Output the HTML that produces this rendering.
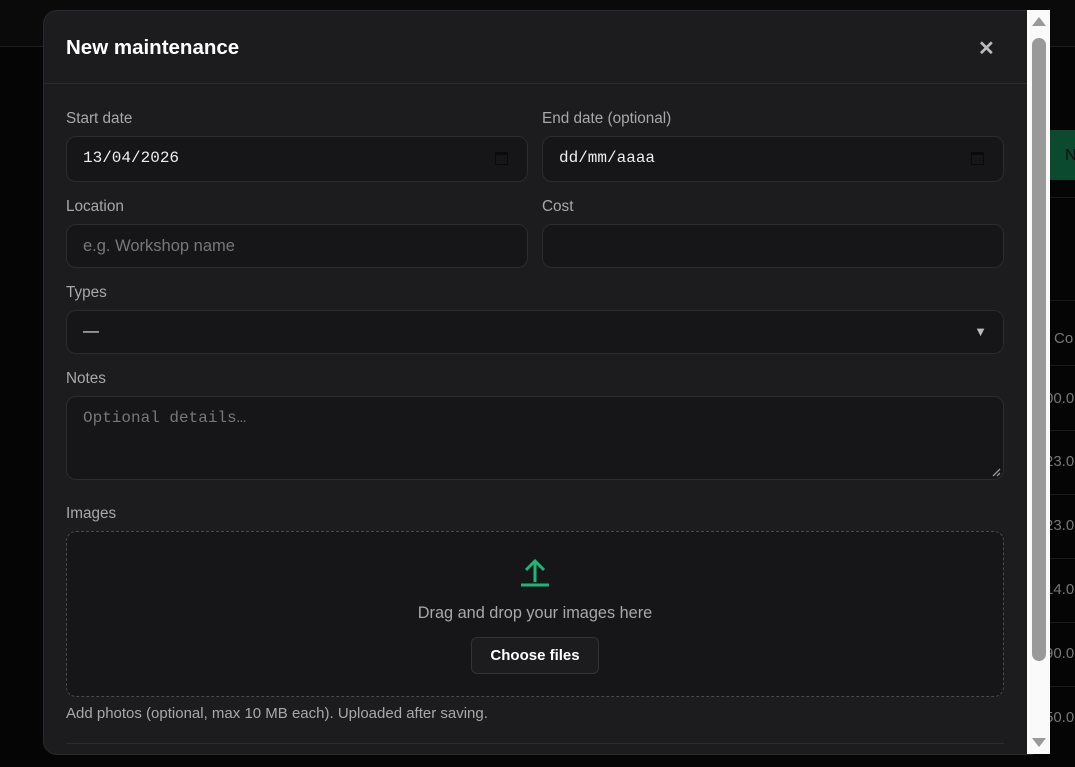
<!DOCTYPE html>
<html><head><style>
*{box-sizing:border-box;margin:0;padding:0}
body{width:1075px;height:767px;background:#050505;position:relative;overflow:hidden;font-family:"Liberation Sans",sans-serif}
.topbar{position:absolute;left:0;top:0;width:1075px;height:47px;background:#0a0a0b;border-bottom:1px solid #1e1e20}
.green{position:absolute;left:1050px;top:130px;width:30px;height:50px;background:#0b4a2e;color:#111;font-size:16px;padding:17px 0 0 15px}
.bgtext{position:absolute;left:1050px;color:#777;font-size:15px}
.row{position:absolute;left:1050px;width:25px;height:1px;background:#1a1a1c}
.modal{position:absolute;left:43px;top:10px;width:1000px;height:745px;background:#1c1c1e;border:1px solid #2a2a2c;border-radius:14px;overflow:hidden}
.hd{height:73px;border-bottom:1px solid #2c2c2e;padding:25px 22px;color:#fff;font-weight:bold;font-size:20.5px}
.x{position:absolute;left:934px;top:25px;color:#bbb;font-size:20px;font-weight:bold}
.lbl{position:absolute;color:#a8a8aa;font-size:15.3px}
.in{position:absolute;background:#161618;border:1px solid #2c2c2e;border-radius:10px;color:#eee;font-family:"Liberation Mono",monospace;font-size:16px;padding:12px 16px}
.cal{position:absolute;right:19px;top:15px;width:13px;height:13px;border:1.5px solid #0a0a0a;border-top-width:3px}
.drop{position:absolute;left:22px;top:520px;width:938px;height:166px;border:1px dashed #4a4a4e;border-radius:10px;background:#161618}
.sb{position:absolute;left:1027px;top:10px;width:23px;height:744px;background:#fafafa}
</style></head><body>
<div class="topbar"></div>
<div class="green">N</div>
<div class="row" style="top:197px"></div><div class="row" style="top:300px"></div><div class="row" style="top:365px"></div>
<div class="row" style="top:430px"></div><div class="row" style="top:494px"></div><div class="row" style="top:558px"></div><div class="row" style="top:622px"></div><div class="row" style="top:686px"></div>
<div class="bgtext" style="top:330px;left:1054px">Co</div>
<div class="bgtext" style="top:390px;left:1045px">00.0</div>
<div class="bgtext" style="top:453px;left:1045px">23.0</div>
<div class="bgtext" style="top:517px;left:1045px">23.0</div>
<div class="bgtext" style="top:581px;left:1045px">14.0</div>
<div class="bgtext" style="top:645px;left:1045px">90.0</div>
<div class="bgtext" style="top:709px;left:1045px">50.0</div>
<div class="modal">
<div class="hd">New maintenance</div>
<div class="x">✕</div>
<div class="lbl" style="left:22px;top:99px">Start date</div>
<div class="lbl" style="left:498px;top:99px">End date (optional)</div>
<div class="in" style="left:22px;top:125px;width:462px;height:46px">13/04/2026<div class="cal"></div></div>
<div class="in" style="left:498px;top:125px;width:462px;height:46px">dd/mm/aaaa<div class="cal"></div></div>
<div class="lbl" style="left:22px;top:187px">Location</div>
<div class="lbl" style="left:498px;top:187px">Cost</div>
<div class="in" style="left:22px;top:213px;width:462px;height:44px;font-family:'Liberation Sans',sans-serif;color:#77777a;font-size:16.5px">e.g. Workshop name</div>
<div class="in" style="left:498px;top:213px;width:462px;height:44px"></div>
<div class="lbl" style="left:22px;top:273px">Types</div>
<div class="in" style="left:22px;top:299px;width:938px;height:44px;font-family:'Liberation Sans',sans-serif">—<span style="position:absolute;right:16px;top:13px;color:#bbb;font-size:13px">▼</span></div>
<div class="lbl" style="left:22px;top:359px">Notes</div>
<div class="in" style="left:22px;top:385px;width:938px;height:84px;color:#77777a;font-size:16px">Optional details…
<svg style="position:absolute;right:2px;bottom:2px" width="9" height="9" viewBox="0 0 9 9"><path d="M1 8L8 1M5 8L8 5" stroke="#999" stroke-width="1.3"/></svg></div>
<div class="lbl" style="left:22px;top:494px">Images</div>
<div class="drop">
<svg style="position:absolute;left:454px;top:26px" width="30" height="30" viewBox="0 0 30 30"><path d="M14 24V4M5 12l9-9 9 9M0 27h28" stroke="#1fb57a" stroke-width="3" fill="none"/></svg>
<div style="position:absolute;top:72px;width:100%;text-align:center;color:#a8a8aa;font-size:16.3px">Drag and drop your images here</div>
<div style="position:absolute;left:404px;top:105px;width:128px;height:37px;background:#1c1c1e;border:1px solid #333;border-radius:6px;color:#fff;font-weight:bold;font-size:15px;text-align:center;line-height:35px">Choose files</div>
</div>
<div class="lbl" style="left:22px;top:694px;font-size:15px">Add photos (optional, max 10 MB each). Uploaded after saving.</div>
<div style="position:absolute;left:22px;top:732px;width:938px;height:1px;background:#2c2c2e"></div>
</div>
<div class="sb">
<div style="position:absolute;left:5px;top:7px;width:0;height:0;border-left:7px solid transparent;border-right:7px solid transparent;border-bottom:9px solid #999"></div>
<div style="position:absolute;left:5px;top:28px;width:14px;height:623px;background:#999;border-radius:7px"></div>
<div style="position:absolute;left:5px;top:728px;width:0;height:0;border-left:7px solid transparent;border-right:7px solid transparent;border-top:9px solid #999"></div>
</div>
</body></html>
